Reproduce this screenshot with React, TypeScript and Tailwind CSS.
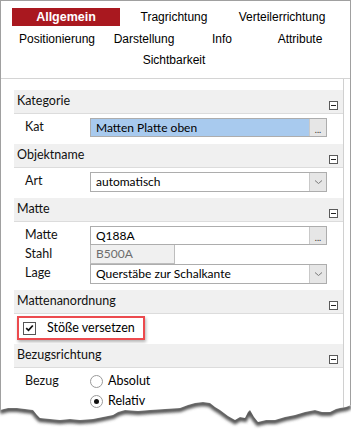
import React from "react";

const gridFont = { fontFamily: 'Lato, "Open Sans", sans-serif' };
const tabFont = { fontFamily: '"Liberation Sans", Arial, sans-serif' };

function Minus() {
  return (
    <div className="mb-[3px] mr-[5px] flex h-[9px] w-[9px] items-center justify-center border border-[#5a5a5a] bg-white">
      <div className="h-px w-[5px] bg-[#222]" />
    </div>
  );
}

function Header({ title }: { title: string }) {
  return (
    <div className="flex h-[24px] items-end justify-between border-b border-[#dcdcdc] bg-[#f0f0f0]">
      <span className="self-center pl-[3px] text-[12.5px] leading-none text-[#111]">{title}</span>
      <Minus />
    </div>
  );
}

function Label({ children }: { children: React.ReactNode }) {
  return <span className="w-[65px] shrink-0 text-[12.5px] text-[#111]">{children}</span>;
}

function Chevron() {
  return (
    <svg width="9" height="6" viewBox="0 0 9 6">
      <path d="M1 1.5 L4.5 4.5 L8 1.5" fill="none" stroke="#7a7a7a" strokeWidth="1" />
    </svg>
  );
}

function TextBox({ value, blue }: { value: string; blue?: boolean }) {
  return (
    <div className="flex h-[19px] w-[237px] border border-[#adadad]">
      <div className={`flex flex-1 items-center pl-[5px] text-[12px] ${blue ? "bg-[#a8caee]" : "bg-white"}`}>
        {value}
      </div>
      <div className="flex w-[17px] items-end justify-center border-l border-[#c9c9c9] bg-[#e6e6e6] pb-[1px] text-[9px] leading-[10px] text-[#333]">
        ...
      </div>
    </div>
  );
}

function Combo({ value }: { value: string }) {
  return (
    <div className="flex h-[20px] w-[237px] border border-[#adadad] bg-white">
      <div className="flex flex-1 items-center pl-[5px] text-[12px]">{value}</div>
      <div className="flex w-[17px] items-center justify-center border-l border-[#c9c9c9] bg-[#e6e6e6]">
        <Chevron />
      </div>
    </div>
  );
}

function Radio({ checked, label }: { checked?: boolean; label: string }) {
  return (
    <div className="flex h-[20px] items-center">
      <div className="flex h-[13px] w-[13px] items-center justify-center rounded-full border border-[#9a9a9a] bg-white">
        {checked && <div className="h-[5px] w-[5px] rounded-full bg-[#111]" />}
      </div>
      <span className="ml-[5px] text-[12.5px]">{label}</span>
    </div>
  );
}

const tabsRow2 = [
  { t: "Positionierung", w: "w-[90px]" },
  { t: "Darstellung", w: "w-[84px]" },
  { t: "Info", w: "w-[72px]" },
  { t: "Attribute", w: "w-[84px]" },
];

const edge =
  "M0 15 L8 13 L17 13 L25 14 L33 15 L37 20 L40 23 L50 24 L60 25 L70 24 L80 25 L93 24 L103 22 L113 20 L118 17 L125 15 L138 16 L150 15 L165 14 L180 13 L188 10 L195 8 L203 7 L210 8 L215 12 L220 15 L228 21 L235 25 L240 22 L245 23 L248 17 L250 15 L254 22 L258 27 L266 25 L275 25 L285 22 L295 20 L305 17 L315 15 L322 17 L330 17 L336 14 L340 13 L346 12 L351 10";

export default function App() {
  return (
    <div className="relative h-[434px] w-[351px] overflow-hidden bg-white text-black" style={gridFont}>
      <div className="h-[430px] w-[351px] border border-[#a0a0a0]">
        {/* tabs */}
        <div className="h-[78px] border-b border-[#d4d4d4] pl-[11px] pt-[7px] text-[12px]" style={tabFont}>
          <div className="flex h-[18px]">
            <div className="flex w-[108px] items-center justify-center bg-[#a9181f] text-[12.5px] font-bold text-white">Allgemein</div>
            <div className="flex w-[108px] items-center justify-center">Tragrichtung</div>
            <div className="flex w-[108px] items-center justify-center">Verteilerrichtung</div>
          </div>
          <div className="mt-[2px] flex h-[21px]">
            {tabsRow2.map((x) => (
              <div key={x.t} className={`flex ${x.w} items-center justify-center`}>
                {x.t}
              </div>
            ))}
          </div>
          <div className="flex h-[21px] w-[324px] items-center justify-center">Sichtbarkeit</div>
        </div>

        {/* property grid */}
        <div className="ml-[13px] w-[330px] border-r border-[#d0d0d0] pt-[11px]">
          <Header title="Kategorie" />
          <div className="pb-[7px] pl-[11px] pt-[4px]">
            <div className="flex h-[19px] items-center">
              <Label>Kat</Label>
              <TextBox value="Matten Platte oben" blue />
            </div>
          </div>

          <Header title="Objektname" />
          <div className="pb-[7px] pl-[11px] pt-[4px]">
            <div className="flex h-[19px] items-center">
              <Label>Art</Label>
              <Combo value="automatisch" />
            </div>
          </div>

          <Header title="Matte" />
          <div className="pb-[7px] pl-[11px] pt-[4px]">
            <div className="flex h-[19px] items-center">
              <Label>Matte</Label>
              <TextBox value="Q188A" />
            </div>
            <div className="flex h-[19px] items-center">
              <Label>Stahl</Label>
              <div className="flex h-[19px] w-[85px] items-center border border-t-0 border-[#bdbdbd] bg-[#f0f0f0] pl-[5px] text-[12px] text-[#6d6d6d]">
                B500A
              </div>
            </div>
            <div className="flex h-[19px] items-center">
              <Label>Lage</Label>
              <Combo value="Querstäbe zur Schalkante" />
            </div>
          </div>

          <Header title="Mattenanordnung" />
          <div className="pb-[4px] pl-[3px] pt-[2px]">
            <div className="flex h-[24px] w-[128px] items-center border-2 border-[#ec4a4e] shadow-[1px_2px_3px_rgba(0,0,0,0.3)]">
              <div className="ml-[4px] flex h-[13px] w-[13px] items-center justify-center border border-[#555] bg-white">
                <svg width="9" height="8" viewBox="0 0 9 8">
                  <path d="M1.2 4.2 L3.5 6.3 L7.8 1.5" fill="none" stroke="#111" strokeWidth="1.8" />
                </svg>
              </div>
              <span className="ml-[11px] text-[12.5px]">Stöße versetzen</span>
            </div>
          </div>

          <Header title="Bezugsrichtung" />
          <div className="flex pl-[11px] pt-[3px]">
            <div className="flex h-[20px] items-center">
              <Label>Bezug</Label>
            </div>
            <div className="flex flex-col">
              <Radio label="Absolut" />
              <Radio checked label="Relativ" />
            </div>
          </div>
        </div>
      </div>

      {/* torn paper edge */}
      <svg className="absolute left-0 top-[395px]" width="351" height="39" viewBox="0 0 351 39">
        <defs>
          <clipPath id="below">
            <path d={`${edge} L351 39 L0 39 Z`} />
          </clipPath>
          <filter id="blur" x="-10%" y="-50%" width="120%" height="200%">
            <feGaussianBlur stdDeviation="1.8" />
          </filter>
        </defs>
        <path d={`${edge} L351 39 L0 39 Z`} fill="#ffffff" />
        <g clipPath="url(#below)">
          <path d={edge} fill="none" stroke="#555555" strokeWidth="5" filter="url(#blur)" transform="translate(0 1.5)" />
        </g>
      </svg>
    </div>
  );
}
